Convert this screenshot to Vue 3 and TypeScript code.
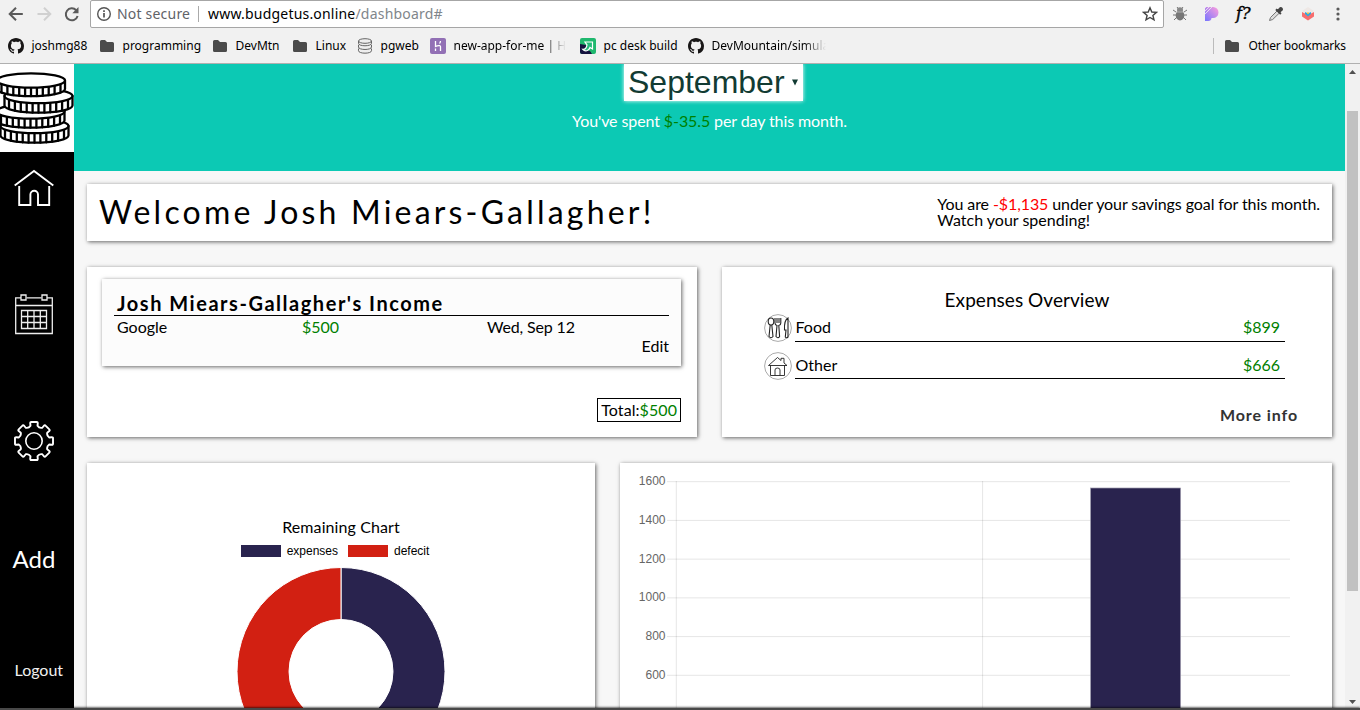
<script setup lang="ts">
interface Bookmark { label: string; icon: 'github' | 'folder' | 'db' | 'heroku' | 'arrow'; width: number; fade?: boolean }

const bookmarks: Bookmark[] = [
  { label: 'joshmg88', icon: 'github', width: 91 },
  { label: 'programming', icon: 'folder', width: 113 },
  { label: 'DevMtn', icon: 'folder', width: 80 },
  { label: 'Linux', icon: 'folder', width: 65 },
  { label: 'pgweb', icon: 'db', width: 73 },
  { label: 'new-app-for-me | Heroku', icon: 'heroku', width: 150, fade: true },
  { label: 'pc desk build', icon: 'arrow', width: 108 },
  { label: 'DevMountain/simulation', icon: 'github', width: 152, fade: true },
]

const githubPath = 'M8 0C3.58 0 0 3.58 0 8c0 3.54 2.29 6.53 5.47 7.59.4.07.55-.17.55-.38 0-.19-.01-.82-.01-1.49-2.01.37-2.53-.49-2.69-.94-.09-.23-.48-.94-.82-1.13-.28-.15-.68-.52-.01-.53.63-.01 1.08.58 1.23.82.72 1.21 1.87.87 2.33.66.07-.52.28-.87.51-1.07-1.78-.2-3.64-.89-3.64-3.95 0-.87.31-1.59.82-2.15-.08-.2-.36-1.02.08-2.12 0 0 .67-.21 2.2.82.64-.18 1.32-.27 2-.27s1.36.09 2 .27c1.53-1.04 2.2-.82 2.2-.82.44 1.1.16 1.92.08 2.12.51.56.82 1.27.82 2.15 0 3.07-1.87 3.75-3.65 3.95.29.25.54.73.54 1.48 0 1.07-.01 1.93-.01 2.2 0 .21.15.46.55.38A8.01 8.01 0 0 0 16 8c0-4.42-3.58-8-8-8z'

interface Coin { cx: number; cy: number; h: number }
const coins: Coin[] = [
  { cx: 34.5, cy: 62, h: 9.5 },
  { cx: 30.5, cy: 47.5, h: 9 },
  { cx: 38.5, cy: 32, h: 9.5 },
  { cx: 31, cy: 16.5, h: 8.5 },
]
const RX = 34
const RY = 7.2
function coinBody(c: Coin): string {
  return `M${c.cx - RX} ${c.cy}v${c.h}a${RX} ${RY} 0 0 0 ${RX * 2} 0v${-c.h}`
}
function coinTicks(c: Coin): string {
  let d = ''
  for (let i = -5; i <= 5; i++) {
    const x = i * 5.9
    const y = c.cy + RY * Math.sqrt(1 - (x / RX) ** 2)
    d += `M${(c.cx + x).toFixed(1)} ${y.toFixed(1)}v${c.h}`
  }
  return d
}

function gearPath(): string {
  const at = (r: number, deg: number) => {
    const a = (deg * Math.PI) / 180
    return `${(20 + r * Math.sin(a)).toFixed(2)} ${(20 - r * Math.cos(a)).toFixed(2)}`
  }
  let d = ''
  for (let i = 0; i < 8; i++) {
    const b = i * 45
    d += `${i ? 'L' : 'M'}${at(15.6, b - 13)}L${at(18.2, b - 12)}Q${at(19.5, b - 11)} ${at(19.2, b - 8)}L${at(19.2, b + 8)}Q${at(19.5, b + 11)} ${at(18.2, b + 12)}L${at(15.6, b + 13)}Q${at(13.6, b + 22.5)} ${at(15.6, b + 32)}`
  }
  return d + 'Z'
}

const yLabels = [1600, 1400, 1200, 1000, 800, 600]
const tickY = (i: number) => 18.7 + i * 38.72
const expenses = [
  { name: 'Food', amount: '$899', kind: 'food' },
  { name: 'Other', amount: '$666', kind: 'house' },
]
</script>

<template>
  <div class="window">
    <header class="chrome">
      <div class="toolbar">
        <svg class="nav" width="90" height="28" viewBox="0 0 90 28" fill="none" stroke-width="2">
          <path d="M22.800 14H10M16 7.700L9.700 14l6.300 6.300" stroke="#5a5a5a" />
          <path d="M37.500 14H50M44 7.700l6.300 6.300-6.300 6.300" stroke="#d0d0d0" />
          <path d="M76.200 10.200A6 6 0 1 0 77.600 16" stroke="#5a5a5a" />
          <path d="M78.500 7v6.200h-6.200z" fill="#5a5a5a" />
        </svg>
        <div class="omnibox">
          <svg width="16" height="16" viewBox="0 0 16 16" fill="none" stroke="#555">
            <circle cx="8" cy="8" r="6.300" stroke-width="1.400" />
            <path d="M8 7v4.500M8 4.300v1.700" stroke-width="1.700" />
          </svg>
          <span class="secure">Not secure</span>
          <span class="bar"></span>
          <span class="url">www.budgetus.online<i>/dashboard#</i></span>
          <svg class="star" width="16" height="16" viewBox="0 0 16 16" fill="none" stroke="#444" stroke-width="1.400">
            <path d="M8 1.800l1.800 4.200 4.600.4-3.500 3 1.100 4.500L8 11.500l-4 2.400 1.100-4.500-3.500-3 4.600-.4z" />
          </svg>
        </div>
        <div class="extensions">
          <svg width="16" height="16" viewBox="0 0 16 16">
            <path d="M1 4l3 2M15 4l-3 2M1 9h14M2 14l3-3M14 14l-3-3M5 1l1.500 2M11 1L9.500 3" stroke="#777" />
            <ellipse cx="8" cy="9.500" rx="4.300" ry="5" fill="#777" />
            <ellipse cx="8" cy="4" rx="3" ry="2.700" fill="#888" />
            <path d="M4.500 6h7" stroke="#aaa" />
          </svg>
          <svg width="16" height="16" viewBox="0 0 16 16">
            <defs><linearGradient id="pg" x1="1" y1="0" x2="0" y2="1"><stop stop-color="#ff9edb" /><stop offset="1" stop-color="#7775ff" /></linearGradient></defs>
            <path d="M1 1h8a5.500 5.500 0 0 1 0 11H7.500C7.500 14 6 15 4.500 15H1z" fill="url(#pg)" />
            <path d="M0 6l6-6M0 9l9-9M0 3l3-3" stroke="#f1f1f1" stroke-width=".8" />
          </svg>
          <span class="fq">f?</span>
          <svg width="16" height="16" viewBox="0 0 16 16">
            <path d="M1.500 14.500l1-3L9 5l2.200 2.200-6.500 6.300z" fill="#ddd" stroke="#777" />
            <path d="M8 3.200L12.900 8M9.500 5.500L12 2.500c1-1.200 2.800.6 1.600 1.600l-3 2.500" fill="#444" stroke="#444" stroke-width="2" />
          </svg>
          <svg width="16" height="16" viewBox="0 0 16 16">
            <path d="M2 5l6-4 6 4-6 5z" fill="#eee8e5" />
            <path d="M2 6l3 1.500L8 10l3-2.500L14 6v4.500L8 14.500l-6-4z" fill="#f76d6d" />
            <path d="M5 6l3 1.500L11 6v2l-3 2.400L5 8z" fill="#2aa8e0" />
            <path d="M6.500 6.500h3L8 8.500z" fill="#fbc02d" />
          </svg>
          <svg class="dots" width="6" height="16" viewBox="0 0 6 16" fill="#5a5a5a"><circle cx="3" cy="3" r="1.600" /><circle cx="3" cy="8" r="1.600" /><circle cx="3" cy="13" r="1.600" /></svg>
        </div>
      </div>
      <div class="bookmarks">
        <div v-for="b in bookmarks" :key="b.label" class="bookmark" :style="{ width: b.width + 'px' }">
          <svg width="16" height="16" viewBox="0 0 16 16">
            <path v-if="b.icon === 'github'" :d="githubPath" fill="#191717" />
            <path v-else-if="b.icon === 'folder'" d="M1 3.500Q1 2 2.500 2H6l2 2h5.500Q15 4 15 5.500v7q0 1.500-1.500 1.500h-11Q1 14 1 12.500z" fill="#4b4b4b" />
            <g v-else-if="b.icon === 'db'" fill="#eee" stroke="#555" stroke-width=".9">
              <path d="M1.500 10.500v2.200c0 3.300 13 3.300 13 0v-2.200M1.500 6.800V9c0 3.300 13 3.300 13 0V6.800M1.500 3v2.300c0 3.300 13 3.300 13 0V3" />
              <ellipse cx="8" cy="3" rx="6.500" ry="2.300" />
            </g>
            <g v-else-if="b.icon === 'heroku'">
              <rect width="16" height="16" rx="2" fill="#9270b5" />
              <path d="M5.500 3v5.500c2-1 5-1.700 5 .3V13M10.500 3c0 1-.5 2-1 2.500M5.500 10.500v2.500" fill="none" stroke="#fff" stroke-width="1.300" />
            </g>
            <g v-else>
              <rect width="16" height="16" rx="2" fill="#1fb86e" />
              <path d="M0 6l6 1 1 5 3 1 2 3H2q-2 0-2-2z" fill="#15133f" />
              <path d="M5 4h7.500v7L10 9.500C9 13 5 14 2.800 11.300 5 11.500 6.500 10 7 6.800z" fill="#23ba78" stroke="#fff" stroke-width="1.200" />
            </g>
          </svg>
          <span class="label" :class="{ fade: b.fade }">{{ b.label }}</span>
        </div>
        <div class="other">
          <svg width="16" height="16" viewBox="0 0 16 16"><path d="M1 3.500Q1 2 2.500 2H6l2 2h5.500Q15 4 15 5.500v7q0 1.500-1.500 1.500h-11Q1 14 1 12.500z" fill="#4b4b4b" /></svg>
          <span>Other bookmarks</span>
        </div>
      </div>
    </header>

    <div class="viewport">
      <nav class="sidebar">
        <svg class="logo" width="74" height="88" viewBox="0 0 74 88">
          <g v-for="(c, i) in coins" :key="i" stroke="#000" stroke-width="2.300" stroke-linecap="round">
            <path :d="coinBody(c)" fill="#fff" />
            <path :d="coinTicks(c)" fill="none" />
            <ellipse :cx="c.cx" :cy="c.cy" :rx="RX" :ry="RY" fill="#fff" />
          </g>
        </svg>
        <svg class="home" width="40" height="38" viewBox="0 0 40 38" fill="none" stroke="#fff" stroke-width="1.900">
          <path d="M.7 16.500L20 2l19.300 14.500M5.200 17v19h11.200V25.500a3.800 3.800 0 0 1 7.600 0V36h11.200V17" />
        </svg>
        <svg class="calendar" width="40" height="42" viewBox="0 0 40 42" fill="none" stroke="#eee" stroke-width="1.300">
          <path d="M7 4.800H1.700V40.500h36.600V4.800H33M12.500 4.800H27.500M1.700 12.500h36.600" />
          <path d="M7 2h5v5H7zM28 2h5v5h-5z" />
          <path d="M7.500 17.500h25v18h-25zM7.500 23.500h25M7.500 29.500h25M13.700 17.500v18M20 17.500v18M26.300 17.500v18" />
        </svg>
        <svg class="gear" width="40" height="40" viewBox="0 0 40 40" fill="none" stroke="#fff" stroke-width="1.900" stroke-linejoin="round">
          <path :d="gearPath()" />
          <circle cx="20" cy="20" r="8.200" stroke-width="1.600" />
        </svg>
        <span class="add">Add</span>
        <span class="logout">Logout</span>
      </nav>

      <main class="content">
        <section class="hero">
          <div class="month"><span>September</span><svg width="6" height="7" viewBox="0 0 6 7"><path d="M0 .5h6L3 6.500z" fill="#123b33" /></svg></div>
          <p>You've spent <b>$-35.5</b> per day this month.</p>
        </section>

        <div class="cards">
          <section class="card welcome">
            <h1>Welcome Josh Miears-Gallagher!</h1>
            <p><span class="goal">You are <b>-$1,135</b> under your savings goal for this month.</span><br>Watch your spending!</p>
          </section>

          <div class="row even">
            <section class="card income">
              <div class="entry">
                <h2>Josh Miears-Gallagher's Income</h2>
                <div class="fields"><span>Google</span><span class="green">$500</span><span class="date">Wed, Sep 12</span></div>
                <div class="edit">Edit</div>
              </div>
              <div class="total">Total:<span class="green">$500</span></div>
            </section>

            <section class="card overview">
              <h3>Expenses Overview</h3>
              <div v-for="e in expenses" :key="e.name" class="expense">
                <svg width="28" height="28" viewBox="0 0 28 28" fill="none" stroke="#222" stroke-width="1.100">
                  <circle cx="14" cy="14" r="13.400" stroke="#aaa" stroke-width="1" />
                  <g v-if="e.kind === 'food'">
                    <ellipse cx="7" cy="7.500" rx="2.800" ry="3.500" />
                    <path d="M6.200 11l-1.200 11.500q2 2.500 4 0L7.800 11M11 4v5q0 2 2 2.500l-1 11q2 2.500 3.600 0l-.8-11q2-.5 2-2.500V4M13 4v5M15 4v5M24 4v19q-1.500 1.500-2.700 0l.7-7h-1.500Q20 6 24 4z" />
                  </g>
                  <path v-else stroke-width=".9" d="M4.500 13.500L13.500 5.500l3.500 3V6.300h3V11l3 2.500zM6.500 13.500V23.500h14v-10M11 23.500V18q0-2 2.500-2t2.500 2v5.500" />
                </svg>
                <div class="line"><span>{{ e.name }}</span><span class="green">{{ e.amount }}</span></div>
              </div>
              <a class="more">More info</a>
            </section>
          </div>

          <div class="row charts">
            <section class="card remaining">
              <h4>Remaining Chart</h4>
              <div class="legend">
                <i class="swatch navy"></i><span>expenses</span>
                <i class="swatch red"></i><span>defecit</span>
              </div>
              <svg class="donut" width="210" height="210" viewBox="0 0 210 210" stroke="#fff" stroke-width="1">
                <path d="M105 .5a104 104 0 0 1 0 208v-52a52 52 0 0 0 0-104z" fill="#29234e" />
                <path d="M105 .5a104 104 0 0 0 0 208v-52a52 52 0 0 1 0-104z" fill="#d22012" />
              </svg>
            </section>
            <section class="card bars">
              <svg width="712" height="260" viewBox="0 0 712 260">
                <g stroke="#000" stroke-opacity=".1">
                  <path v-for="(l, i) in yLabels" :key="l" :d="`M47 ${tickY(i)}H670`" />
                  <path d="M56.300 18V260M362.600 18V260" />
                </g>
                <text v-for="(l, i) in yLabels" :key="l" x="45.500" :y="Math.ceil(tickY(i)) + 3" text-anchor="end">{{ l }}</text>
                <rect x="470.600" y="25" width="90" height="240" fill="#29234e" stroke="#9d9aad" stroke-width=".7" />
              </svg>
            </section>
          </div>
        </div>
      </main>

      <aside class="scrollbar">
        <svg width="15" height="17" viewBox="0 0 15 17"><path d="M4 10h7L7.500 6z" fill="#505050" /></svg>
        <div class="thumb"></div>
        <svg class="down" width="15" height="17" viewBox="0 0 15 17"><path d="M4 7h7l-3.500 4z" fill="#505050" /></svg>
      </aside>
    </div>
    <div class="shelf"></div>
  </div>
</template>

<style>
html, body { margin: 0; overflow: hidden; }
</style>

<style scoped>
* { box-sizing: border-box; }
h1, h2, h3, h4, p { margin: 0; font-weight: 400; }
svg { display: block; flex: none; }
.window { position: relative; width: 1360px; height: 710px; overflow: hidden; display: flex; flex-direction: column; background: #f7f7f7; font-family: Lato, "Liberation Sans", sans-serif; font-size: 16px; line-height: 16px; color: #000; }
.chrome { flex: none; height: 64px; background: #f1f1f1; border-bottom: 1px solid #b0b0b0; font-family: "Noto Sans", sans-serif; }
.toolbar { height: 28px; display: flex; }
.omnibox { width: 1074px; height: 28px; border: 1px solid #a6a6a6; border-radius: 2px; background: #fff; display: flex; align-items: center; padding: 0 5px; font-size: 14px; letter-spacing: .2px; }
.secure { width: 81px; margin-left: 5px; color: #5f6368; font-size: 14px; }
.bar { width: 1px; height: 16px; background: #aaa; margin-right: 9px; }
.url i { font-style: normal; color: #80868b; }
.star { margin-left: auto; }
.extensions { display: flex; align-items: center; gap: 16px; padding-left: 8px; }
.fq { width: 16px; font: italic 700 16px/18px "Noto Sans", sans-serif; font-family: "DejaVu Serif", serif; font-weight: 400; letter-spacing: 0; -webkit-text-stroke: .4px #000; white-space: nowrap; }
.dots { margin-left: 3px; }
.bookmarks { height: 35px; display: flex; align-items: center; padding-left: 8px; font-size: 12px; }
.bookmark { flex: none; display: flex; align-items: center; }
.label { flex: 1; min-width: 0; margin-left: 7.500px; margin-right: 14px; overflow: visible; white-space: nowrap; }
.fade { overflow: hidden; -webkit-mask-image: linear-gradient(to right, #000 80%, transparent); mask-image: linear-gradient(to right, #000 80%, transparent); }
.other { margin-left: auto; margin-right: 14px; padding-left: 10px; height: 16px; border-left: 1px solid #bbb; display: flex; align-items: center; gap: 8px; white-space: nowrap; letter-spacing: -.12px; }
.viewport { flex: 1; min-height: 0; display: flex; }
.sidebar { width: 74px; flex: none; background: #000; color: #fff; display: flex; flex-direction: column; align-items: flex-start; }
.logo { background: #fff; }
.home { margin: 17px 0 0 14px; }
.calendar { margin: 86px 0 0 14px; }
.gear { margin: 86px 0 0 14px; }
.add { margin: 84px 0 0 12.500px; font-size: 24px; line-height: 28px; }
.logout { margin: 89px 0 0 14.500px; line-height: 16px; color: #f0f0f0; }
.content { width: 1271px; flex: none; overflow: hidden; background: #f7f7f7; }
.hero { height: 107px; background: #0cc9b4; display: flex; flex-direction: column; align-items: center; color: #fff; }
.month { width: 179px; height: 37px; margin-left: 8px; background: #fff; color: #123b33; box-shadow: 0 0 4px #fff; display: flex; align-items: center; padding: 0 5px 0 4px; font: 32px/37px "Liberation Sans", sans-serif; }
.month span { width: 164px; }
.hero p { margin-top: 12px; letter-spacing: -.1px; }
.hero b { color: #008000; font-weight: 400; }
.green { color: #008000; }
.cards { padding: 13px 13px 0; display: flex; flex-direction: column; gap: 26px; }
.card { background: #fff; box-shadow: 1px 1px 4px rgba(0, 0, 0, .6); }
.welcome { height: 57px; display: flex; justify-content: space-between; align-items: center; padding: 0 12px 2px; }
.welcome h1 { font-size: 32px; line-height: 40px; letter-spacing: 3.200px; }
.welcome b { color: #f00; font-weight: 400; }
.goal { letter-spacing: -.09px; }
.row { display: grid; gap: 25px; }
.even { grid-template-columns: 610px 610px; height: 170px; }
.charts { grid-template-columns: 508px 712px; height: 400px; }
.income { padding: 12px 16px 0 15px; display: flex; flex-direction: column; }
.entry { height: 87px; padding: 13px 12px 0; background: #fcfcfc; box-shadow: 1px 1px 4px rgba(0, 0, 0, .6); }
.entry h2 { height: 24px; padding-left: 3px; border-bottom: 1px solid #000; font-size: 20px; line-height: 22px; font-weight: 700; letter-spacing: 1.530px; white-space: nowrap; }
.fields { display: grid; grid-template-columns: 185px 185px 1fr; padding: 3px 0 0 3px; }
.date { letter-spacing: -.15px; }
.edit { text-align: right; margin-top: 3px; }
.total { align-self: flex-end; margin-top: 32px; height: 24px; border: 1px solid #000; padding: 3px; letter-spacing: .07px; }
.overview { padding: 21px 47px 0 42px; display: flex; flex-direction: column; }
.overview h3 { font-size: 19px; line-height: 24px; text-align: center; margin-left: 5px; letter-spacing: .05px; }
.expense { display: flex; height: 28px; margin-top: 2px; }
.expense + .expense { margin-top: 10px; }
.line { flex: 1; margin-left: 3px; height: 28px; border-bottom: 1px solid #000; display: flex; justify-content: space-between; padding: 5px 5px 0 .5px; }
.expense + .expense .line { height: 27px; }
.more { align-self: flex-end; margin: 27px -13px 0 0; font-weight: 700; letter-spacing: .9px; color: #333; }
.remaining { display: flex; flex-direction: column; align-items: center; padding-top: 56px; }
.remaining h4 { font-size: 16px; line-height: 16px; letter-spacing: .1px; }
.legend { display: flex; align-items: center; height: 12px; margin-top: 10px; margin-right: 12px; font: 12px/12px "Liberation Sans", sans-serif; }
.swatch { width: 40px; height: 12px; margin-right: 6px; }
.legend span { margin-right: 10px; }
.legend span:last-child { margin-right: 0; }
.navy { background: #29234e; }
.red { background: #d22012; }
.donut { margin-top: 10px; margin-right: 1px; }
.bars text { font: 12px "Liberation Sans", sans-serif; fill: #666; }
.scrollbar { width: 15px; background: #f1f1f1; display: flex; flex-direction: column; align-items: center; }
.thumb { width: 11px; height: 480px; margin-top: 30px; background: #c1c1c1; }
.down { margin-top: auto; }
.shelf { position: absolute; left: 0; right: 0; bottom: 0; height: 2px; background: #484848; box-shadow: 0 -1px 2px rgba(0, 0, 0, .6); }
</style>
